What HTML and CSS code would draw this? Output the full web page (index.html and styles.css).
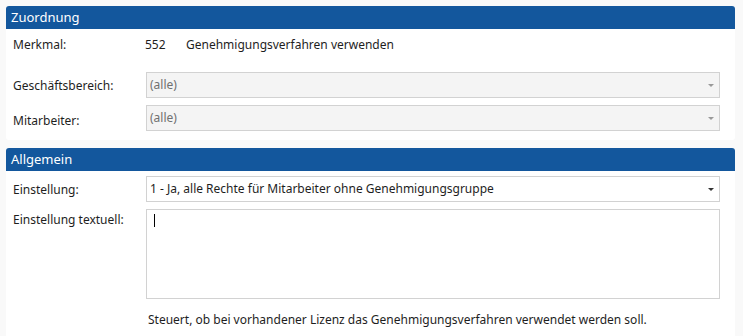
FILE: index.html
```html
<!DOCTYPE html>
<html lang="de">
<head>
    <meta charset="UTF-8">
    <title>Genehmigungsverfahren</title>
    <link rel="stylesheet" href="styles.css">
</head>
<body>

    <div class="panel zuordnung">
        <div class="panel-head">Zuordnung</div>
        <div class="panel-body">
            <div class="row merkmal">
                <span class="label">Merkmal:</span>
                <span class="value"><span class="nummer">552</span>Genehmigungsverfahren verwenden</span>
            </div>
            <div class="row gb">
                <span class="label">Geschäftsbereich:</span>
                <div class="select disabled">(alle)<span class="arrow"></span></div>
            </div>
            <div class="row ma">
                <span class="label">Mitarbeiter:</span>
                <div class="select disabled">(alle)<span class="arrow"></span></div>
            </div>
        </div>
    </div>

    <div class="panel allgemein">
        <div class="panel-head">Allgemein</div>
        <div class="panel-body">
            <div class="row">
                <span class="label">Einstellung:</span>
                <div class="select">1 - Ja, alle Rechte für Mitarbeiter ohne Genehmigungsgruppe<span class="arrow"></span></div>
            </div>
            <div class="row top">
                <span class="label">Einstellung textuell:</span>
                <div class="textbox"><span class="cursor"></span></div>
            </div>
            <div class="row">
                <span class="label"></span>
                <span class="hinweis">Steuert, ob bei vorhandener Lizenz das Genehmigungsverfahren verwendet werden soll.</span>
            </div>
        </div>
    </div>

</body>
</html>
```

FILE: styles.css
```css
body {
    margin: 0;
    padding: 6px 8px 0 6px;
    background: #f9f9f9;
    font-family: "Noto Sans", "Open Sans", sans-serif;
    font-size: 12px;
    color: #1e1e1e;
    height: 330px;
    overflow: hidden;
}
.panel {
    background: #fff;
    border-radius: 3px;
}
.allgemein {
    margin-top: 8px;
    height: 200px;
}
.panel-head {
    background: #13579d;
    color: #fff;
    font-size: 13px;
    height: 23px;
    line-height: 22px;
    padding-left: 5px;
    border-radius: 3px 3px 0 0;
}
.panel-body {
    padding: 2px 15px 9px 7px;
    display: flex;
    flex-direction: column;
    gap: 7px;
}
.allgemein .panel-body {
    padding-top: 5px;
}
.row {
    display: flex;
    align-items: center;
    min-height: 26px;
}
.row.top {
    align-items: flex-start;
}
.row.top .label {
    padding-top: 2px;
}
.merkmal {
    margin-bottom: 8px;
}
.ma .label {
    padding-top: 5px;
}
.label {
    width: 133px;
    flex: none;
}
.value {
    margin-left: -1px;
}
.nummer {
    display: inline-block;
    width: 41px;
}
.select {
    flex: 1;
    height: 26px;
    box-sizing: border-box;
    border: 1px solid #d2d2d2;
    background: #fff;
    padding-left: 3px;
    line-height: 23px;
    position: relative;
}
.select.disabled {
    background: #f4f4f4;
    color: #707070;
}
.arrow {
    position: absolute;
    right: 5px;
    top: 11px;
    border-left: 3px solid transparent;
    border-right: 3px solid transparent;
    border-top: 3px solid #333;
}
.disabled .arrow {
    border-top-color: #999;
}
.textbox {
    flex: 1;
    height: 90px;
    box-sizing: border-box;
    border: 1px solid #d2d2d2;
    padding: 4px 7px;
}
.cursor {
    display: block;
    width: 1px;
    height: 13px;
    background: #000;
}
.hinweis {
    padding-left: 2px;
}
```
